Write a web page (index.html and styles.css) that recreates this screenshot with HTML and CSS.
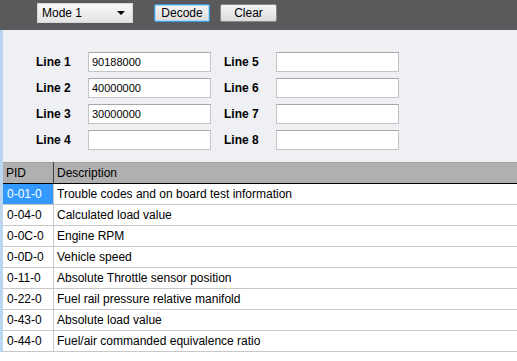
FILE: index.html
```html
<!DOCTYPE html>
<html lang="en">

<head>
  <meta charset="UTF-8">
  <title>PID Decoder</title>
  <link rel="stylesheet" href="styles.css">
</head>

<body>
  <div class="toolbar">
    <div class="select">
      <span>Mode 1</span>
      <span class="arrow"></span>
    </div>
    <button class="btn focused">Decode</button>
    <button class="btn">Clear</button>
  </div>

  <div class="main">
    <div class="panel">
      <div class="lines">
        <label>Line 1</label><input type="text" value="90188000">
        <label>Line 5</label><input type="text">
        <label>Line 2</label><input type="text" value="40000000">
        <label>Line 6</label><input type="text">
        <label>Line 3</label><input type="text" value="30000000">
        <label>Line 7</label><input type="text">
        <label>Line 4</label><input type="text">
        <label>Line 8</label><input type="text">
      </div>
    </div>

    <table class="pids">
      <thead>
        <tr>
          <th class="pid">PID</th>
          <th>Description</th>
        </tr>
      </thead>
      <tbody>
        <tr>
          <td class="pid selected">0-01-0</td>
          <td>Trouble codes and on board test information</td>
        </tr>
        <tr>
          <td class="pid">0-04-0</td>
          <td>Calculated load value</td>
        </tr>
        <tr>
          <td class="pid">0-0C-0</td>
          <td>Engine RPM</td>
        </tr>
        <tr>
          <td class="pid">0-0D-0</td>
          <td>Vehicle speed</td>
        </tr>
        <tr>
          <td class="pid">0-11-0</td>
          <td>Absolute Throttle sensor position</td>
        </tr>
        <tr>
          <td class="pid">0-22-0</td>
          <td>Fuel rail pressure relative manifold</td>
        </tr>
        <tr>
          <td class="pid">0-43-0</td>
          <td>Absolute load value</td>
        </tr>
        <tr>
          <td class="pid">0-44-0</td>
          <td>Fuel/air commanded equivalence ratio</td>
        </tr>
      </tbody>
    </table>
  </div>
</body>

</html>
```

FILE: styles.css
```css
html {
  font-family: 'Liberation Sans', Arial, sans-serif;
  font-size: 12px;
  background: white;
}

body {
  margin: 0;
}

.toolbar {
  display: flex;
  align-items: flex-start;
  height: 30px;
  padding-left: 37px;
  background: #5a595b;
}

.select {
  display: flex;
  align-items: center;
  justify-content: space-between;
  box-sizing: border-box;
  width: 96px;
  height: 20px;
  margin-top: 3px;
  padding: 0 7px 0 4px;
  background: linear-gradient(#f8f8f8, #e4e4e4);
  border: 1px solid #d8d8d8;
}

.arrow {
  width: 0;
  height: 0;
  border-left: 4px solid transparent;
  border-right: 4px solid transparent;
  border-top: 4px solid black;
}

.btn {
  box-sizing: border-box;
  height: 18px;
  margin-top: 4px;
  padding: 0;
  font-family: inherit;
  font-size: 12px;
  color: black;
  background: linear-gradient(#f6f6f6, #dcdcdc);
  border: 1px solid #8a8a8a;
  border-radius: 2px;
}

.btn.focused {
  width: 56px;
  margin-left: 21px;
  border: 1px solid #3c9ee0;
  box-shadow: inset 0 0 0 1px #a8d4f4;
}

.btn + .btn {
  width: 57px;
  margin-left: 10px;
}

.main {
  border-left: 3px solid #bcd6f2;
}

.panel {
  padding: 22px 0 12px 33px;
  background: #eff0f4;
}

.lines {
  display: grid;
  grid-template-columns: 52px 136px 52px 123px;
  row-gap: 6px;
  align-items: center;
}

.lines label {
  font-weight: bold;
}

.lines input {
  box-sizing: border-box;
  width: 123px;
  height: 20px;
  margin: 0;
  padding: 0 3px;
  font-family: inherit;
  font-size: 11px;
  border: 1px solid #c4c4c4;
  border-top-color: #a8a8a8;
  background: white;
}

.pids {
  width: 100%;
  border-collapse: collapse;
  border-top: 1px solid #a0a0a0;
}

.pids th {
  height: 20px;
  padding: 0 3px;
  text-align: left;
  font-weight: normal;
  background: #b0b0b0;
  border-bottom: 1px solid black;
}

.pids th.pid {
  border-right: 1px solid #404040;
}

.pids td {
  height: 20px;
  padding: 0 3px;
  border-bottom: 1px solid #c8c8c8;
}

.pids td.pid {
  width: 43px;
  padding-left: 4px;
  border-right: 1px solid #c8c8c8;
}

.pids td.selected {
  background: #3399ff;
  color: white;
}
```
